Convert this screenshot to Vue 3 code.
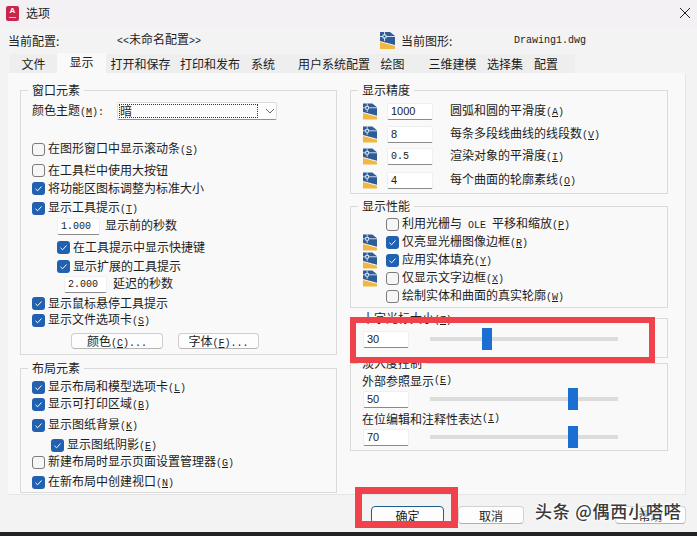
<script setup>
const tabs = [
  { t: '文件', w: 47 }, { t: '显示', w: 49, on: true }, { t: '打开和保存', w: 69 }, { t: '打印和发布', w: 70 },
  { t: '系统', w: 36 }, { t: '用户系统配置', w: 86, ml: 10 }, { t: '绘图', w: 31 }, { t: '三维建模', w: 57, ml: 16 },
  { t: '选择集', w: 48 }, { t: '配置', w: 34 }
]
const windowRows = [
  { t: '在图形窗口中显示滚动条', k: 'S', mt: 20 },
  { t: '在工具栏中使用大按钮', mt: 3 },
  { t: '将功能区图标调整为标准大小', on: true, mt: 0 },
  { t: '显示工具提示', k: 'T', on: true, mt: 2 },
  { input: '1.000', t: '显示前的秒数', ind: 25, gap: 5, mt: 0 },
  { t: '在工具提示中显示快捷键', on: true, ind: 25, mt: 3 },
  { t: '显示扩展的工具提示', on: true, ind: 25, mt: 1 },
  { input: '2.000', t: '延迟的秒数', ind: 32, gap: 6, mt: 0 },
  { t: '显示鼠标悬停工具提示', on: true, mt: 1 },
  { t: '显示文件选项卡', k: 'S', on: true, mt: -1 }
]
const layoutRows = [
  { t: '显示布局和模型选项卡', k: 'L', on: true, mt: 9 },
  { t: '显示可打印区域', k: 'B', on: true, mt: -1 },
  { t: '显示图纸背景', k: 'K', on: true, mt: 3 },
  { t: '显示图纸阴影', k: 'E', on: true, ind: 19, mt: 2 },
  { t: '新建布局时显示页面设置管理器', k: 'G', mt: -1 },
  { t: '在新布局中创建视口', k: 'N', on: true, mt: 2 }
]
const precision = [
  { v: '1000', t: '圆弧和圆的平滑度', k: 'A', mt: 11 },
  { v: '8', t: '每条多段线曲线的线段数', k: 'V', mt: 5 },
  { v: '0.5', mono: true, t: '渲染对象的平滑度', k: 'I', mt: 4 },
  { v: '4', t: '每个曲面的轮廓素线', k: 'O', mt: 6 }
]
const perf = [
  { a: '利用光栅与', mono: ' OLE ', t: '平移和缩放', k: 'P' },
  { t: '仅亮显光栅图像边框', k: 'R', on: true, icon: true },
  { t: '应用实体填充', k: 'Y', on: true, icon: true },
  { t: '仅显示文字边框', k: 'X', icon: true },
  { t: '绘制实体和曲面的真实轮廓', k: 'W' }
]
const pct = (x) => `${((x - 430) / 188) * 100}%`
</script>

<template>
  <div class="page">
    <header class="title">
      <div class="app-icon"><span>A</span><i></i></div>
      <span class="title-text">选项</span>
      <svg class="close" viewBox="0 0 10 10" width="10" height="10"><path d="M0 0L10 10M10 0L0 10" stroke="#222" stroke-width="1" fill="none" /></svg>
    </header>

    <div class="profile">
      <span class="p-label">当前配置:</span>
      <span class="p-name"><span class="m">&lt;&lt;</span>未命名配置<span class="m">&gt;&gt;</span></span>
      <svg class="cad" viewBox="0 0 15 17" width="15" height="17">
        <path d="M0 0H10L15 4V13L0 9Z" fill="#2f5c96" /><path d="M0 10L15 14V17H0Z" fill="#f2b740" />
        <path d="M0 4.500H15M4.500 0V9" stroke="#cfe0f5" stroke-width="1" /><rect x="3" y="3" width="3" height="3" fill="#2f5c96" stroke="#fff" stroke-width="0.800" />
      </svg>
      <span class="p-label2">当前图形:</span>
      <span class="m">Drawing1.dwg</span>
    </div>

    <nav class="tabs">
      <div v-for="tab in tabs" :key="tab.t + tab.w" class="tab" :class="{ on: tab.on }"
        :style="{ width: tab.w + 'px', marginLeft: (tab.ml || 0) + 'px' }">{{ tab.t }}</div>
    </nav>

    <main class="panel">
      <div class="col">
        <section class="group g-window">
          <span class="legend">窗口元素</span>
          <div class="theme">
            <span class="theme-label">颜色主题<span class="k">(<u>M</u>):</span></span>
            <div class="select">
              <span class="select-val">暗</span>
              <svg viewBox="0 0 10 6" width="10" height="6"><path d="M1 1L5 5L9 1" stroke="#666" fill="none" /></svg>
            </div>
          </div>
          <div v-for="r in windowRows" :key="r.t" class="row" :style="{ marginTop: r.mt + 'px', marginLeft: (r.ind || 0) + 'px' }">
            <template v-if="r.input">
              <input class="field mono f43" readonly :value="r.input" />
              <span class="after-field" :style="{ marginLeft: r.gap + 'px' }">{{ r.t }}</span>
            </template>
            <template v-else>
              <span class="box" :class="{ on: r.on }"><svg v-if="r.on" viewBox="0 0 13 13" width="13" height="13"><path d="M3.500 6.800L5.600 8.800L9.500 4.500" stroke="#fff" fill="none" /></svg></span>
              <span>{{ r.t }}<span v-if="r.k" class="k">(<u>{{ r.k }}</u>)</span></span>
            </template>
          </div>
          <div class="btns">
            <div class="btn b-color">颜色<span class="k">(<u>C</u>)...</span></div>
            <div class="btn b-font">字体<span class="k">(<u>F</u>)...</span></div>
          </div>
        </section>

        <section class="group g-layout">
          <span class="legend">布局元素</span>
          <div v-for="r in layoutRows" :key="r.t" class="row" :style="{ marginTop: r.mt + 'px', marginLeft: (r.ind || 0) + 'px' }">
            <span class="box" :class="{ on: r.on }"><svg v-if="r.on" viewBox="0 0 13 13" width="13" height="13"><path d="M3.500 6.800L5.600 8.800L9.500 4.500" stroke="#fff" fill="none" /></svg></span>
            <span>{{ r.t }}<span class="k">(<u>{{ r.k }}</u>)</span></span>
          </div>
        </section>
      </div>

      <div class="col">
        <section class="group g-prec">
          <span class="legend">显示精度</span>
          <div v-for="r in precision" :key="r.t" class="row" :style="{ marginTop: r.mt + 'px' }">
            <svg class="cad" viewBox="0 0 15 17" width="14" height="17">
              <path d="M0 0H10L15 4V13L0 9Z" fill="#2f5c96" /><path d="M0 10L15 14V17H0Z" fill="#f2b740" />
              <path d="M0 4.500H15M4.500 0V9" stroke="#cfe0f5" stroke-width="1" /><rect x="3" y="3" width="3" height="3" fill="#2f5c96" stroke="#fff" stroke-width="0.800" />
            </svg>
            <input class="field f46 prec-in" :class="{ mono: r.mono }" readonly :value="r.v" />
            <span class="prec-t">{{ r.t }}<span class="k">(<u>{{ r.k }}</u>)</span></span>
          </div>
        </section>

        <section class="group g-perf">
          <span class="legend">显示性能</span>
          <div v-for="r in perf" :key="r.t" class="row">
            <span class="icon-slot">
              <svg v-if="r.icon" class="cad" viewBox="0 0 15 17" width="14" height="17">
                <path d="M0 0H10L15 4V13L0 9Z" fill="#2f5c96" /><path d="M0 10L15 14V17H0Z" fill="#f2b740" />
                <path d="M0 4.500H15M4.500 0V9" stroke="#cfe0f5" stroke-width="1" /><rect x="3" y="3" width="3" height="3" fill="#2f5c96" stroke="#fff" stroke-width="0.800" />
              </svg>
            </span>
            <span class="box" :class="{ on: r.on }"><svg v-if="r.on" viewBox="0 0 13 13" width="13" height="13"><path d="M3.500 6.800L5.600 8.800L9.500 4.500" stroke="#fff" fill="none" /></svg></span>
            <span>{{ r.a }}<span v-if="r.mono" class="m">{{ r.mono }}</span>{{ r.t }}<span class="k">(<u>{{ r.k }}</u>)</span></span>
          </div>
        </section>

        <section class="group g-cross">
          <span class="legend">十字光标大小<span class="k">(<u>Z</u>)</span></span>
          <div class="row slide-row">
            <input class="field f46" readonly value="30" />
            <div class="track"><i class="thumb" :style="{ left: pct(482) }"></i></div>
          </div>
        </section>

        <section class="group g-fade">
          <span class="legend">淡入度控制</span>
          <div class="row fade-label">外部参照显示<span class="k">(<u>E</u>)</span></div>
          <div class="row slide-row">
            <input class="field f46" readonly value="50" />
            <div class="track"><i class="thumb" :style="{ left: pct(568) }"></i></div>
          </div>
          <div class="row fade-label second">在位编辑和注释性表达<span class="k">(<u>I</u>)</span></div>
          <div class="row slide-row">
            <input class="field f46" readonly value="70" />
            <div class="track"><i class="thumb" :style="{ left: pct(568) }"></i></div>
          </div>
        </section>
      </div>
    </main>

    <footer class="foot">
      <div class="fbtn ok">确定</div>
      <div class="fbtn cancel">取消</div>
      <div class="fbtn help">帮助</div>
    </footer>
    <div class="bar"></div>

    <div class="mark m1"></div>
    <div class="mark m2"></div>
    <div class="wm">头条 @偶西小嗒嗒</div>
  </div>
</template>

<style>
html, body { margin: 0; padding: 0; }
</style>

<style scoped>
.page {
  position: relative;
  width: 697px;
  height: 536px;
  overflow: hidden;
  background: #f3f3f3;
  color: #1c1c1c;
  font: 12px/18px "Noto Sans CJK SC", "Liberation Sans", sans-serif;
}
.m, .mono { font-family: "Liberation Mono", "Noto Sans CJK SC", monospace; font-size: 10px; }
.k { font-family: "Liberation Mono", monospace; font-size: 10px; }
.title {
  display: flex;
  align-items: center;
  box-sizing: border-box;
  height: 27px;
  padding: 0 0 1px 6px;
  background: #f4f1f4;
}
.app-icon {
  display: flex;
  flex-direction: column;
  align-items: center;
  width: 13px;
  height: 15px;
  border-radius: 2px;
  background: #c9264c;
  color: #fff;
  font: 700 8px/10px "Liberation Sans", sans-serif;
}
.app-icon i { width: 7px; height: 1px; margin-top: 1px; background: #f3b6c4; }
.title-text { margin-left: 7px; }
.close { margin-left: auto; margin-right: 7px; }
.profile {
  display: flex;
  align-items: center;
  height: 27px;
  padding-left: 8px;
}
.p-label { width: 109px; }
.p-name { width: 263px; }
.p-label2 { width: 113px; margin-left: 6px; }
.cad { flex: none; }
.tabs {
  display: flex;
  width: 565px;
  height: 19px;
  margin-left: 10px;
  background: #eeeeee;
}
.tab { flex: none; text-align: center; line-height: 20px; }
.tab.on { margin-top: -1px; height: 21px; background: #f9f9f9; position: relative; line-height: 18px; }
.panel {
  display: flex;
  gap: 13px;
  width: 665px;
  height: 404px;
  margin-left: 8px;
  padding: 17px 0 0 12px;
  background: #f9f9f9;
  box-shadow: 1px 1px 0 #e6e6e6;
}
.col { display: flex; flex-direction: column; width: 318px; }
.col:first-child { width: 317px; }
.group {
  position: relative;
  box-sizing: border-box;
  padding-left: 11px;
  border: 1px solid #dadada;
}
.legend {
  position: absolute;
  top: -10px;
  left: 7px;
  padding: 0 4px;
  background: #f9f9f9;
}
.g-window { height: 265px; padding-top: 11px; }
.g-layout { height: 125px; margin-top: 13px; }
.g-prec { height: 104px; padding-left: 12px; }
.g-perf { height: 102px; margin-top: 12px; padding-top: 8px; padding-left: 12px; }
.g-cross { height: 40px; margin-top: 10px; padding: 11px 0 0 12px; }
.g-fade { height: 88px; margin-top: 5px; padding: 8px 0 0 12px; }
.row { display: flex; align-items: center; height: 18px; white-space: pre; }
.after-field { position: relative; top: -1px; }
.theme { display: flex; align-items: center; height: 18px; }
.theme-label { width: 85px; }
.select {
  display: flex;
  align-items: center;
  box-sizing: border-box;
  width: 160px;
  height: 18px;
  padding-left: 1px;
  background: #fdfdfd;
  border: 1px solid #dddddd;
  border-bottom-color: #8f8f8f;
  border-radius: 2px;
}
.select-val {
  box-sizing: border-box;
  width: 139px;
  height: 14px;
  border: 1px dotted #333;
  line-height: 12px;
}
.select svg { margin-left: 7px; }
.box {
  flex: none;
  box-sizing: border-box;
  width: 13px;
  height: 13px;
  margin-right: 3px;
  border: 1px solid #7b7b7b;
  border-radius: 3px;
  background: #f6f6f6;
}
.box.on { border: 0; background: #2260b0; }
.box svg { display: block; }
.field {
  flex: none;
  box-sizing: border-box;
  height: 17px;
  padding: 0 3px;
  border: 1px solid #efefef;
  border-bottom: 1px solid #8a8a8a;
  border-radius: 2px;
  outline: none;
  background: #fff;
  color: #222;
  font: 11px "Liberation Sans", sans-serif;
}
.field.mono { font: 10px "Liberation Mono", monospace; }
.f43 { width: 43px; }
.f46 { width: 46px; }
.prec-in { margin-left: 10px; }
.prec-t { margin-left: 17px; }
.btns { display: flex; gap: 15px; margin: 4px 0 0 39px; }
.btn {
  box-sizing: border-box;
  height: 16px;
  border: 1px solid #cfcfcf;
  border-bottom-color: #b5b5b5;
  border-radius: 4px;
  background: #fdfdfd;
  text-align: center;
  line-height: 14px;
}
.b-color { width: 92px; }
.b-font { width: 81px; }
.icon-slot { flex: none; width: 23px; height: 18px; display: flex; align-items: center; }
.track {
  position: relative;
  width: 188px;
  height: 4px;
  margin-left: 21px;
  background: #dcdcdc;
}
.thumb {
  position: absolute;
  top: -9px;
  width: 10px;
  height: 22px;
  background: #1c6fd2;
}
.fade-label { margin-left: -1px; }
.second { margin-top: 2px; }
.foot {
  display: flex;
  height: 26px;
  padding: 12px 0 0 371px;
}
.fbtn {
  box-sizing: border-box;
  height: 18px;
  border: 1px solid #d2d2d2;
  border-bottom-color: #b0b0b0;
  border-radius: 4px;
  background: #fdfdfd;
  text-align: center;
  line-height: 17px;
}
.ok { width: 73px; border: 1px solid #1f5f8f; }
.cancel { width: 66px; margin-left: 14px; }
.help { width: 71px; margin-left: 91px; }
.bar { height: 4px; background: #1f2326; }
.mark {
  position: absolute;
  box-sizing: border-box;
  border: 7px solid #f0424a;
}
.m1 { left: 350px; top: 317px; width: 305px; height: 46px; border-width: 6px; }
.m2 { left: 355px; top: 487px; width: 103px; height: 41px; }
.wm {
  position: absolute;
  left: 535px;
  top: 498px;
  color: #3a3a3a;
  font-size: 17px;
  line-height: 26px;
  font-weight: 500;
  letter-spacing: 0.8px;
  white-space: nowrap;
  text-shadow: 0 0 3px #fff, 0 0 3px #fff, 0 0 4px #fff;
}
</style>
